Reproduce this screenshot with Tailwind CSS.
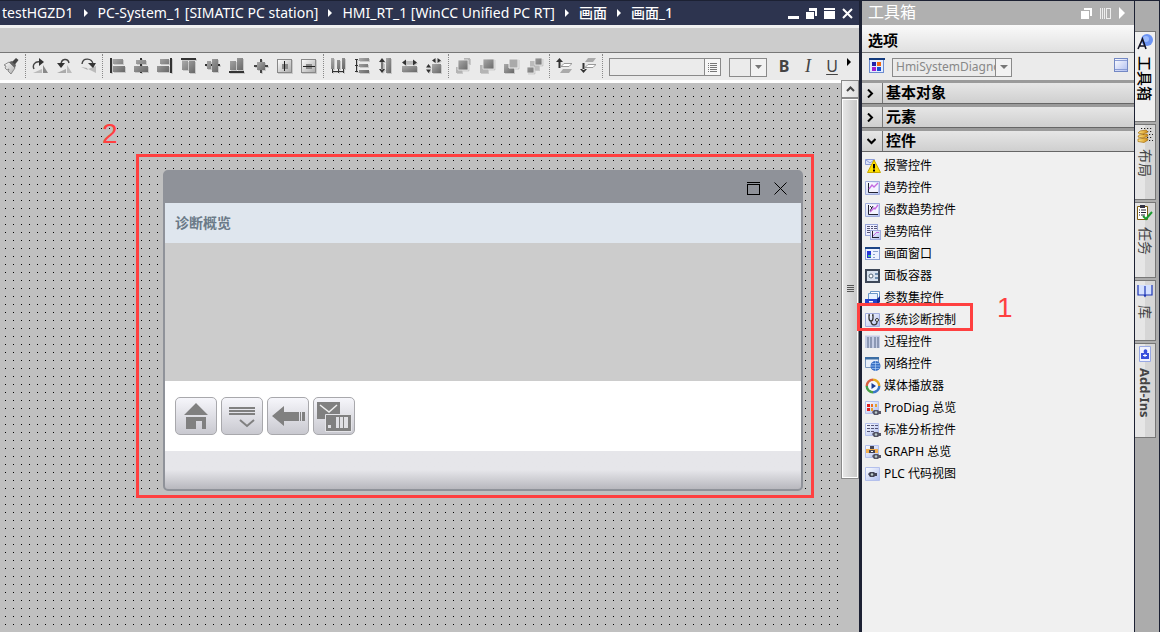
<!DOCTYPE html>
<html lang="zh-CN">
<head>
    <meta charset="UTF-8">
    <meta name="viewport" content="width=device-width, initial-scale=1.0">
    <title>HMI_RT_1 - 画面_1</title>
    <script src="https://cdn.jsdelivr.net/npm/@tailwindcss/browser@4"></script>
</head>
<body class="h-screen flex overflow-hidden bg-[#1c2133] text-black font-['Noto_Sans','Noto_Sans_CJK_SC',sans-serif]">

    <!-- Shared gradients -->
    <svg class="absolute w-0 h-0" aria-hidden="true">
        <defs>
            <linearGradient id="metal" x1="0" y1="0" x2="1" y2="1"><stop offset="0" stop-color="#aaa"/><stop offset="1" stop-color="#686868"/></linearGradient>
            <linearGradient id="pale" x1="0" y1="0" x2="1" y2="1"><stop offset="0" stop-color="#fff"/><stop offset="1" stop-color="#aaa"/></linearGradient>
            <linearGradient id="blue" x1="0" y1="0" x2="1" y2="1"><stop offset="0" stop-color="#fff"/><stop offset="1" stop-color="#aebdf0"/></linearGradient>
            <linearGradient id="gold" x1="0" y1="0" x2="1" y2="0"><stop offset="0" stop-color="#ffe98a"/><stop offset="1" stop-color="#d08a10"/></linearGradient>
        </defs>
    </svg>

    <!-- Editor -->
    <main class="flex-1 min-w-0 flex flex-col mr-[3px]">
        <header class="h-[25px] shrink-0 flex items-center bg-[#2d344f] border-t border-[#1c2133] text-white pr-[6px]">
            <nav class="flex items-center flex-1 gap-[10px] pl-[2px] text-[14px] leading-5 whitespace-nowrap">
                <span>testHGZD1</span>
                <svg class="w-1 h-2" viewBox="0 0 4 8"><path d="M0 0l4 4-4 4z" fill="#fff"/></svg>
                <span>PC-System_1 [SIMATIC PC station]</span>
                <svg class="w-1 h-2" viewBox="0 0 4 8"><path d="M0 0l4 4-4 4z" fill="#fff"/></svg>
                <span>HMI_RT_1 [WinCC Unified PC RT]</span>
                <svg class="w-1 h-2" viewBox="0 0 4 8"><path d="M0 0l4 4-4 4z" fill="#fff"/></svg>
                <span class="font-medium">画面</span>
                <svg class="w-1 h-2" viewBox="0 0 4 8"><path d="M0 0l4 4-4 4z" fill="#fff"/></svg>
                <span class="font-medium">画面_1</span>
            </nav>
            <div class="flex gap-[7px]">
                <button aria-label="最小化"><svg class="w-[11px] h-[11px]" viewBox="0 0 11 11" shape-rendering="crispEdges"><path d="M0 8h11v3H0z" fill="#fff"/></svg></button>
                <button aria-label="还原"><svg class="w-[11px] h-[11px]" viewBox="0 0 11 11" shape-rendering="crispEdges"><path d="M0 4h8v7H0zM3 0h8v8H9V3H3z" fill="#fff"/></svg></button>
                <button aria-label="最大化"><svg class="w-[11px] h-[11px]" viewBox="0 0 11 11" shape-rendering="crispEdges"><path d="M0 0h11v2H0zM0 3h11v8H0z" fill="#fff"/></svg></button>
                <button aria-label="关闭"><svg class="w-[11px] h-[11px]" viewBox="0 0 11 11"><path d="M1 1l9 9M10 1l-9 9" stroke="#fff" stroke-width="2"/></svg></button>
            </div>
        </header>
        <div class="h-7 shrink-0 bg-[#ccc] border-t-[3px] border-t-[#f0f0f0] border-b border-b-[#777]"></div>

        <!-- Toolbar -->
        <div class="h-[27px] shrink-0 flex items-center pl-[3px] pb-[2px] bg-[#eaeaea] overflow-hidden relative" role="toolbar">
            <button aria-label="格式刷"><svg class="w-4 h-4" viewBox="0 0 16 16"><path d="M1 7l5-3 6 6-4 6-3-3 1-2-2 1-2-2 1-2z" fill="url(#pale)" stroke="#777" stroke-width=".8"/><path d="M6 4l3-1 4 4-1 3z" fill="#666"/><path d="M9 4l4-4 2.500 2L12 6.500z" fill="#444"/></svg></button>
            <span class="w-px h-6 mx-[6px] border-l border-dotted border-[#888]"></span>
            <div class="flex gap-2">
                <button aria-label="向右旋转"><svg class="w-4 h-4" viewBox="0 0 16 16"><path d="M1 15l9-4v4z" fill="#bbb"/><path d="M11 7l5 8h-5z" fill="#888"/><path d="M2 11c-2-4 1-8 6-7" fill="none" stroke="#444" stroke-width="1.400"/><path d="M7 0l5 4-5 4z" fill="#333"/></svg></button>
                <button aria-label="向左旋转"><svg class="w-4 h-4" viewBox="0 0 16 16"><path d="M1 15l9-4v4z" fill="#aaa"/><path d="M11 7l5 8h-5z" fill="#bbb"/><path d="M13 5C12 0 5 0 5 7" fill="none" stroke="#444" stroke-width="1.400"/><path d="M1 5h8l-4 5z" fill="#333"/></svg></button>
                <button aria-label="翻转"><svg class="w-4 h-4" viewBox="0 0 16 16"><path d="M1 9l6 1 1 2z" fill="#aaa"/><path d="M8 11l8 4V8z" fill="#bbb"/><path d="M2 6C3-1 12 0 13 6" fill="none" stroke="#444" stroke-width="1.400"/><path d="M8 5h8l-3 5z" fill="#333"/></svg></button>
            </div>
            <span class="w-px h-6 mx-[6px] border-l border-dotted border-[#888]"></span>
            <div class="flex gap-2 drop-shadow-[1px_1px_0_#c8c8c8]">
                <button aria-label="左对齐"><svg class="w-4 h-4" viewBox="0 0 16 16"><path d="M4 1h10v5H4zM4 8h12v6H4z" fill="url(#metal)"/><path d="M1 0h2v15H1z" fill="#333"/></svg></button>
                <button aria-label="水平居中"><svg class="w-4 h-4" viewBox="0 0 16 16"><path d="M7 0h2v15H7z" fill="#333"/><path d="M3 2h10v4H3zM1 8h14v6H1z" fill="url(#metal)"/></svg></button>
                <button aria-label="右对齐"><svg class="w-4 h-4" viewBox="0 0 16 16"><path d="M3 1h9v5H3zM0 8h12v6H0z" fill="url(#metal)"/><path d="M13 0h2v15h-2z" fill="#333"/></svg></button>
                <button aria-label="顶端对齐"><svg class="w-4 h-4" viewBox="0 0 16 16"><path d="M1 3h6v9H1zM8 3h6v12H8z" fill="url(#metal)"/><path d="M0 0h15v2H0z" fill="#333"/></svg></button>
                <button aria-label="垂直居中"><svg class="w-4 h-4" viewBox="0 0 16 16"><path d="M0 6h15v2H0z" fill="#333"/><path d="M2 3h4v8H2zM7 1h6v13H7z" fill="url(#metal)"/></svg></button>
                <button aria-label="底端对齐"><svg class="w-4 h-4" viewBox="0 0 16 16"><path d="M1 3h6v9H1zM8 0h6v12H8z" fill="url(#metal)"/><path d="M0 13h15v2H0z" fill="#333"/></svg></button>
                <button aria-label="居中"><svg class="w-4 h-4" viewBox="0 0 16 16"><path d="M7 1h2v14H7zM1 7h14v2H1z" fill="#444"/><path d="M4 4h8v8H4z" fill="url(#metal)"/></svg></button>
                <button aria-label="窗口内水平居中"><svg class="w-4 h-4" viewBox="0 0 16 16" shape-rendering="crispEdges"><path d="M.5 1.500h14v13H.5z" fill="url(#pale)" stroke="#888"/><path d="M5 6h6v5H5z" fill="#888"/><path d="M7 3h1v10H7z" fill="#222"/></svg></button>
                <button aria-label="窗口内垂直居中"><svg class="w-4 h-4" viewBox="0 0 16 16" shape-rendering="crispEdges"><path d="M.5 1.500h14v13H.5z" fill="url(#pale)" stroke="#888"/><path d="M5 6h6v5H5z" fill="#888"/><path d="M2 8h12v1H2z" fill="#222"/></svg></button>
            </div>
            <span class="w-px h-6 mx-[6px] border-l border-dotted border-[#888]"></span>
            <div class="flex gap-2 drop-shadow-[1px_1px_0_#c8c8c8]">
                <button aria-label="水平等距"><svg class="w-4 h-4" viewBox="0 0 16 16"><path d="M1 0h3v11H1zM7 2h3v9H7zM12 0h3v11h-3z" fill="url(#metal)"/><path d="M2 13.500h12M2.500 11v4M8.500 11v4M13.500 11v4" stroke="#333"/></svg></button>
                <button aria-label="垂直等距"><svg class="w-4 h-4" viewBox="0 0 16 16"><path d="M5 0h10v3H5zM5 6h9v3H5zM5 12h10v3H5z" fill="url(#metal)"/><path d="M2.500 1v13M1 1.500h3M1 7.500h3M1 13.500h3" stroke="#333"/></svg></button>
                <button aria-label="相同高度"><svg class="w-4 h-4" viewBox="0 0 16 16"><path d="M8 0h5v15H8z" fill="url(#metal)"/><path d="M3 5h3v6H3z" fill="#bbb"/><path d="M4 0l3 4H1zM4 15l3-4H1zM3.500 3h1v9h-1z" fill="#333"/></svg></button>
                <button aria-label="相同宽度"><svg class="w-4 h-4" viewBox="0 0 16 16"><path d="M0 8h15v6H0z" fill="url(#metal)"/><path d="M4 3h8v3H4z" fill="#bbb"/><path d="M0 4.500l4-3v6zM15 4.500l-4-3v6z" fill="#333"/></svg></button>
                <button aria-label="相同大小"><svg class="w-4 h-4" viewBox="0 0 16 16"><path d="M6 6h9v9H6z" fill="url(#metal)"/><path d="M6 2.500L9.500 0v5zM15 2.500L11.500 0v5zM2.500 6l2.500 3.500H0zM2.500 15L5 11.500H0z" fill="#333"/></svg></button>
            </div>
            <span class="w-px h-6 mx-[6px] border-l border-dotted border-[#888]"></span>
            <div class="flex gap-2 drop-shadow-[1px_1px_0_#c8c8c8]">
                <button aria-label="置于顶层"><svg class="w-4 h-4" viewBox="0 0 16 16"><path d="M9 0h6v6H9zM1 9h6v6H1z" fill="#b4b4b4"/><path d="M3 2h10v10H3z" fill="url(#metal)" stroke="#eee" stroke-width=".8"/></svg></button>
                <button aria-label="上移一层"><svg class="w-4 h-4" viewBox="0 0 16 16"><path d="M1 7h8v8H1z" fill="#b4b4b4"/><path d="M4 1h11v10H4z" fill="url(#metal)" stroke="#eee" stroke-width=".8"/></svg></button>
                <button aria-label="下移一层"><svg class="w-4 h-4" viewBox="0 0 16 16"><path d="M1 6h10v9H1z" fill="url(#metal)"/><path d="M6 1h9v9H6z" fill="#aaa" stroke="#eee"/></svg></button>
                <button aria-label="置于底层"><svg class="w-4 h-4" viewBox="0 0 16 16"><path d="M3 3h9v9H3z" fill="#bbb"/><path d="M8 0h7v7H8zM0 9h7v6H0z" fill="url(#metal)" stroke="#eee" stroke-width=".8"/></svg></button>
            </div>
            <span class="w-px h-6 mx-[6px] border-l border-dotted border-[#888]"></span>
            <div class="flex gap-2">
                <button aria-label="上移图层"><svg class="w-4 h-4" viewBox="0 0 16 16"><path d="M3.500 0L7 4H0zM2.500 3h2v7h-2z" fill="#333"/><path d="M8 5.500h8l-3 3H5z" fill="#fff" stroke="#999"/><path d="M7 11h9l-3 4H4z" fill="#aaa"/></svg></button>
                <button aria-label="下移图层"><svg class="w-4 h-4" viewBox="0 0 16 16"><path d="M3.500 15L7 11H0zM2.500 5h2v7h-2z" fill="#333"/><path d="M8 0h8l-3 4H5z" fill="#aaa"/><path d="M8 6.500h8l-3 3H5z" fill="#fff" stroke="#999"/></svg></button>
            </div>
            <span class="w-px h-6 mx-[6px] border-l border-dotted border-[#888]"></span>
            <div class="w-28 h-[18px] flex border border-[#8a8a8a] mt-[3px]">
                <input type="text" aria-label="字体" class="flex-1 min-w-0 bg-[#ebebeb] px-1 text-xs outline-none">
                <button aria-label="选择字体" class="w-4 border-l border-[#8a8a8a] bg-[#f6f6f6] flex items-center justify-center"><svg class="w-[9px] h-[9px]" viewBox="0 0 9 9" shape-rendering="crispEdges"><path d="M0 .5h1M2 .5h7M0 2.500h1M2 2.500h7M0 4.500h1M2 4.500h7M0 6.500h1M2 6.500h7M0 8.500h1M2 8.500h7" stroke="#777"/></svg></button>
            </div>
            <div class="relative w-[38px] h-[19px] ml-2 mt-[3px]">
                <select aria-label="字号" class="appearance-none block w-full h-full border border-[#8a8a8a] bg-[#ebebeb]"></select>
                <span class="absolute inset-y-px right-px w-4 border-l border-[#8a8a8a] bg-[#f2f2f2] flex items-center justify-center pointer-events-none"><svg class="w-[7px] h-1" viewBox="0 0 7 4"><path d="M0 0h7L3.500 4z" fill="#777"/></svg></span>
            </div>
            <div class="flex gap-2 ml-[9px] text-[16px] leading-4 text-[#444]">
                <button class="w-4 font-bold">B</button>
                <button class="w-4 italic font-['Liberation_Serif',serif] text-[18px]">I</button>
                <button class="w-4 underline underline-offset-2">U</button>
            </div>
            <button aria-label="更多" class="ml-[7px] mb-2"><svg class="w-1 h-2" viewBox="0 0 4 8"><path d="M0 0l4 4-4 4z"/></svg></button>
        </div>

        <div class="flex-1 min-h-0 flex">
            <!-- Screen canvas -->
            <div class="flex-1 min-w-0 border-t-[3px] border-white bg-[#c0c0c0] relative">
                <svg class="absolute inset-0 w-full h-full" aria-hidden="true" shape-rendering="crispEdges">
                    <pattern id="grid" x="5" y="5" width="8" height="8" patternUnits="userSpaceOnUse"><rect width="1" height="1"/></pattern>
                    <rect width="100%" height="100%" fill="url(#grid)"/>
                </svg>
                <span class="absolute left-[102px] top-[35px] text-[28px] leading-8 text-[#ff4040] font-['Liberation_Sans',sans-serif]">2</span>
                <div class="relative mt-[71px] ml-[136px] mr-[27px] border-3 border-[#ff4040] pt-[13px] pb-1 pl-6 pr-2">
                    <section class="rounded-[5px] overflow-hidden border-2 border-[#8f9299] bg-[#8f9299]">
                        <div class="h-[31px] flex items-center justify-end gap-[14px] pr-[14px] pt-[2px]">
                            <button aria-label="最大化"><svg class="w-[13px] h-[13px]" viewBox="0 0 13 13" shape-rendering="crispEdges"><path d="M0 .5h13M.5 2.500h12v10H.5z" fill="none" stroke="#000"/></svg></button>
                            <button aria-label="关闭"><svg class="w-[13px] h-[13px]" viewBox="0 0 13 13"><path d="M.5.5l12 12M12.500.5l-12 12" stroke="#000"/></svg></button>
                        </div>
                        <h2 class="h-10 flex items-center pl-[10px] pb-[2px] bg-[#dfe6ee] text-[14px] font-bold text-[#6b7a88]">诊断概览</h2>
                        <div class="h-[138px] bg-[#ccc]"></div>
                        <div class="h-[70px] bg-white flex items-center gap-1 pl-[10px]">
                            <button aria-label="主页" class="w-[42px] h-[38px] rounded-[5px] border border-[#a8a8ac] bg-linear-to-b from-[#f6f6fb] to-[#c9c9d0]">
                                <svg class="w-10 h-9" viewBox="0 0 40 36" fill="#808080"><path d="M20 5L32 17H8zM10 19h20v12h-4v-8h-6v8H10z"/></svg>
                            </button>
                            <button aria-label="列表" class="w-[42px] h-[38px] rounded-[5px] border border-[#a8a8ac] bg-linear-to-b from-[#f6f6fb] to-[#c9c9d0]">
                                <svg class="w-10 h-9" viewBox="0 0 40 36" fill="none" stroke="#808080" stroke-width="2"><path d="M7 10h26M7 13h26M7 16h26"/><path d="M18 22l7 6 7-6"/></svg>
                            </button>
                            <button aria-label="返回" class="w-[42px] h-[38px] rounded-[5px] border border-[#a8a8ac] bg-linear-to-b from-[#f6f6fb] to-[#c9c9d0]">
                                <svg class="w-10 h-9" viewBox="0 0 40 36" fill="#808080"><path d="M4 18L16 8v6h15v9H16v5zM32 14h1v9h-1zM34 14h3v9h-3z"/></svg>
                            </button>
                            <button aria-label="诊断缓冲区" class="w-[42px] h-[38px] rounded-[5px] border border-[#a8a8ac] bg-linear-to-b from-[#f6f6fb] to-[#c9c9d0]">
                                <svg class="w-10 h-9" viewBox="0 0 40 36"><path d="M3 4h23v17H3z" fill="#808080"/><path d="M6 7l9 7 8-7" fill="none" stroke="#eee" stroke-width="1.500"/><path d="M11.500 16.500h26v17h-26z" fill="#808080" stroke="#e4e4e8"/><path d="M14 27h3v3h-3zM22 19h3v11h-3zM26 19h3v11h-3zM30 19h4v11h-4z" fill="#e0e0e4"/></svg>
                            </button>
                        </div>
                        <div class="h-[38px] bg-linear-to-b from-[#e6e6ea] from-50% to-[#b8b8be]"></div>
                    </section>
                </div>
            </div>

            <!-- Scrollbar -->
            <div class="w-[18px] flex flex-col bg-[#c0c0c0]">
                <button aria-label="向上滚动" class="h-[18px] shrink-0 border border-[#8a8a8a] bg-linear-to-r from-[#f4f4f4] to-[#ddd] flex items-center justify-center"><svg class="w-[9px] h-[6px]" viewBox="0 0 9 6"><path d="M1 5l3.500-3.500L8 5" fill="none" stroke="#444" stroke-width="2"/></svg></button>
                <div class="h-[69%] border border-[#8a8a8a] bg-white p-px">
                    <div class="h-full bg-linear-to-r from-[#e6e6e6] to-[#c8c8c8] flex items-center justify-center"><svg class="w-[7px] h-[7px]" viewBox="0 0 7 7" shape-rendering="crispEdges"><path d="M0 .5h7M0 2.500h7M0 4.500h7M0 6.500h7" stroke="#555"/></svg></div>
                </div>
            </div>
        </div>
    </main>

    <!-- Toolbox -->
    <aside class="w-[272px] shrink-0 flex flex-col bg-[#f0f0f0] mt-px">
        <header class="h-6 shrink-0 flex items-center gap-2 pl-[6px] pr-[9px] bg-[#b0b0b0] text-white">
            <h1 class="flex-1 text-[16px] leading-[22px] pb-[2px]">工具箱</h1>
            <button aria-label="浮动"><svg class="w-[11px] h-[11px]" viewBox="0 0 11 11" shape-rendering="crispEdges"><path d="M0 3h8v8H0zM3 0h8v8H9V2H3z" fill="#fff"/></svg></button>
            <button aria-label="列"><svg class="w-[11px] h-[11px]" viewBox="0 0 11 11" shape-rendering="crispEdges"><path d="M.5 0v11M2.500 0v11M4.500 0v11M6.500.5h4v10h-4z" fill="none" stroke="#eee"/></svg></button>
            <button aria-label="折叠"><svg class="w-[6px] h-3" viewBox="0 0 6 12"><path d="M0 0l6 6-6 6z" fill="#fff"/></svg></button>
        </header>
        <h2 class="h-7 shrink-0 pl-[6px] pt-[3px] text-[15px] leading-6 font-bold bg-linear-to-b from-[#fafafa] to-[#e0e0e0] border-b border-[#777]">选项</h2>
        <div class="h-[27px] shrink-0 flex items-center pl-[7px] pr-[5px] pb-[2px] bg-[#ebebeb]">
            <button aria-label="视图"><svg class="w-4 h-4" viewBox="0 0 16 16" shape-rendering="crispEdges"><path d="M.5.5h14v14H.5z" fill="#e4ecff" stroke="#6c8cd0"/><path d="M0 0h16v2H0z" fill="#123a7c"/><path d="M3 4h4v4H3z" fill="#22a"/><path d="M8 4h4v4H8z" fill="#f26a10"/><path d="M3 9h4v4H3z" fill="#a020d0"/><path d="M8 9h4v4H8z" fill="#1a50d0"/></svg></button>
            <div class="relative w-[120px] h-[19px] ml-[7px] mt-[3px]">
                <select aria-label="类型" class="appearance-none block w-full h-full pl-[3px] pr-4 border border-[#8a8a8a] bg-[#ebebeb] text-[12px] leading-4 text-[#888]"><option>HmiSystemDiagnosisControl</option></select>
                <span class="absolute inset-y-px right-px w-4 border-l border-[#8a8a8a] bg-[#f2f2f2] flex items-center justify-center pointer-events-none"><svg class="w-2 h-1" viewBox="0 0 8 4"><path d="M0 0h8L4 4z" fill="#777"/></svg></span>
            </div>
            <button aria-label="预览" class="ml-auto"><svg class="w-[15px] h-[15px]" viewBox="0 0 15 15" shape-rendering="crispEdges"><path d="M.5.5h13v13H.5z" fill="url(#blue)" stroke="#7388c4"/><path d="M1 2.500h12M1 11.500h12" stroke="#8a9cd4"/></svg></button>
        </div>

        <div class="shrink-0 bg-[#9a9a9a] pt-[3px] flex flex-col gap-[3px] text-[15px] font-bold">
            <button class="h-[21px] flex items-center bg-linear-to-b from-[#e6e6e6] to-[#cfcfcf] border-b border-[#666]">
                <span class="w-[21px] h-full border-r border-[#777] flex items-center pl-[5px]"><svg class="w-[7px] h-[9px]" viewBox="0 0 7 9"><path d="M1 .5l4 4-4 4" fill="none" stroke="#000" stroke-width="2"/></svg></span>
                <span class="pl-[3px] pb-[2px] leading-[18px]">基本对象</span>
            </button>
            <button class="h-[21px] flex items-center bg-linear-to-b from-[#e6e6e6] to-[#cfcfcf] border-b border-[#666]">
                <span class="w-[21px] h-full border-r border-[#777] flex items-center pl-[5px]"><svg class="w-[7px] h-[9px]" viewBox="0 0 7 9"><path d="M1 .5l4 4-4 4" fill="none" stroke="#000" stroke-width="2"/></svg></span>
                <span class="pl-[3px] pb-[2px] leading-[18px]">元素</span>
            </button>
            <button class="h-[21px] flex items-center bg-linear-to-b from-[#e6e6e6] to-[#cfcfcf] border-b border-[#666]">
                <span class="w-[21px] h-full border-r border-[#777] flex items-center pl-[5px]"><svg class="w-[9px] h-[7px]" viewBox="0 0 9 7"><path d="M.5 1l4 4 4-4" fill="none" stroke="#000" stroke-width="2"/></svg></span>
                <span class="pl-[3px] pb-[2px] leading-[18px]">控件</span>
            </button>
        </div>

        <ul class="pt-[3px] pl-[3px] text-[12px] leading-[22px]">
            <li class="flex items-center gap-[3px] h-[22px]">
                <svg class="w-4 h-4" viewBox="0 0 16 16"><path d="M.5 1.500h9v5h-9z" fill="#dde4fc" stroke="#8c9cd8"/><path d="M1 2l4 3 4-3" fill="none" stroke="#8c9cd8"/><path d="M9 2l6.500 12.500h-13z" fill="#ffe000" stroke="#c8a800"/><path d="M8 6h2v4.500H8zM8 11.500h2v2H8z"/></svg>
                <span>报警控件</span>
            </li>
            <li class="flex items-center gap-[3px] h-[22px]">
                <svg class="w-4 h-4" viewBox="0 0 16 16"><path d="M.5 1.500h14v13H.5z" fill="url(#blue)" stroke="#a0acdc"/><path d="M3 3h10v9H3z" fill="#f4f4ff"/><path d="M3.500 3v9.500H13" fill="none" stroke="#223"/><path d="M4 9l3-4 2 2 4-4" fill="none" stroke="#c468e0" stroke-width="1.300"/></svg>
                <span>趋势控件</span>
            </li>
            <li class="flex items-center gap-[3px] h-[22px]">
                <svg class="w-4 h-4" viewBox="0 0 16 16"><path d="M.5 1.500h14v13H.5z" fill="url(#blue)" stroke="#a0acdc"/><path d="M3 3h10v9H3z" fill="#f4f4ff"/><path d="M3.500 3v9.500H13M5 4l2 2M8 4L5 9" fill="none" stroke="#223"/><path d="M5 10l4-4 1 1 3-4" fill="none" stroke="#c468e0" stroke-width="1.300"/></svg>
                <span>函数趋势控件</span>
            </li>
            <li class="flex items-center gap-[3px] h-[22px]">
                <svg class="w-4 h-4" viewBox="0 0 16 16" shape-rendering="crispEdges"><path d="M.5.5h12v11H.5z" fill="#eef" stroke="#98a4d8"/><path d="M2 2.500h3M6 2.500h2M9 2.500h3M2 4.500h3M6 4.500h2M9 4.500h3M2 6.500h3M2 8.500h3" stroke="#557"/><path d="M5.500 6.500h10v9h-10z" fill="url(#blue)" stroke="#a0acdc"/><path d="M7.500 7v6.500H14" fill="none" stroke="#223"/><path d="M8 12l3-3 3-1" fill="none" stroke="#c468e0"/></svg>
                <span>趋势陪伴</span>
            </li>
            <li class="flex items-center gap-[3px] h-[22px]">
                <svg class="w-4 h-4" viewBox="0 0 16 16" shape-rendering="crispEdges"><path d="M.5 1.500h14v12H.5z" fill="#eef2ff" stroke="#8ca0d4"/><path d="M0 1h15v2H0z" fill="#1c4486"/><path d="M2 5h4v7H2z" fill="#2434d8"/><path d="M3 9h3v2H3z" fill="#4b8"/><path d="M8 5.500h5M8 8.500h2M8 11.500h2" stroke="#8aa0cc"/></svg>
                <span>画面窗口</span>
            </li>
            <li class="flex items-center gap-[3px] h-[22px]">
                <svg class="w-4 h-4" viewBox="0 0 16 16"><path d="M1 2h13v12H1z" fill="#d8e2ee" stroke="#3e4858" stroke-width="2"/><circle cx="6" cy="8" r="2" fill="#fff" stroke="#567"/><path d="M10 5h3v2h-3zM10 9h3v2h-3z" fill="#7090b0"/></svg>
                <span>面板容器</span>
            </li>
            <li class="flex items-center gap-[3px] h-[22px]">
                <svg class="w-4 h-4" viewBox="0 0 16 16"><path d="M5.500 1.500h9v8h-9z" fill="#fff" stroke="#6c98c8"/><path d="M3.500 3.500h9v7h-9z" fill="#e8f2ff" stroke="#6c98c8"/><path d="M0 9h12v6H0z" fill="#2444cc"/><path d="M12 9l3-3v6l-3 3z" fill="#122c94"/><path d="M4 11h4v1.500H4z" fill="#fff"/></svg>
                <span>参数集控件</span>
            </li>
            <li class="relative flex items-center gap-[3px] h-[22px]">
                <svg class="w-4 h-4" viewBox="0 0 16 16"><path d="M.5 1.500h14v13H.5z" fill="url(#blue)" stroke="#a0acdc"/><path d="M5 3H4v3c0 4 4 4 4 0V3H7M6 9c0 5 6 5 6 1" fill="none" stroke="#333" stroke-width="1.300"/><circle cx="12" cy="8" r="1.500" fill="#fff" stroke="#333"/></svg>
                <span>系统诊断控制</span>
                <span class="absolute -left-2 -top-[6px] w-[116px] h-7 border-3 border-[#ff4040] z-10"></span>
                <span class="absolute left-[132px] -top-[17px] text-[28px] leading-8 text-[#ff4040] font-['Liberation_Sans',sans-serif]">1</span>
            </li>
            <li class="flex items-center gap-[3px] h-[22px]">
                <svg class="w-4 h-4" viewBox="0 0 16 16" shape-rendering="crispEdges"><path d="M0 1h15v13H0z" fill="#c4cce4"/><path d="M2 3h2v11H2zM5 3h2v11H5zM9 3h2v11H9zM12 3h2v11h-2z" fill="#8c98b4"/><path d="M0 1h15v1H0z" fill="#dde"/></svg>
                <span>过程控件</span>
            </li>
            <li class="flex items-center gap-[3px] h-[22px]">
                <svg class="w-4 h-4" viewBox="0 0 16 16"><path d="M.5 1.500h13v10H.5z" fill="#eaf0fa" stroke="#7c98c0"/><path d="M0 1h14v2.500H0z" fill="#3c6ea4"/><circle cx="10.500" cy="10" r="5" fill="#3870c4"/><path d="M6 10h9M7 7.500h7M7 12.500h7M10.500 5v10" stroke="#b8d8ff" stroke-width=".6"/></svg>
                <span>网络控件</span>
            </li>
            <li class="flex items-center gap-[3px] h-[22px]">
                <svg class="w-4 h-4" viewBox="0 0 16 16" fill="none" stroke-width="3"><path d="M8 2a6 6 0 0 1 6 6" stroke="#e8a820"/><path d="M14 8a6 6 0 0 1-6 6" stroke="#3c78c8"/><path d="M8 14a6 6 0 0 1-6-6" stroke="#48a048"/><path d="M2 8a6 6 0 0 1 6-6" stroke="#d86040"/><circle cx="8" cy="8" r="5" fill="#f4f8ff"/><path d="M6.500 5l4.500 3-4.500 3z" fill="#1c3c90"/></svg>
                <span>媒体播放器</span>
            </li>
            <li class="flex items-center gap-[3px] h-[22px]">
                <svg class="w-4 h-4" viewBox="0 0 16 16"><path d="M.5 1.500h13v12H.5z" fill="url(#blue)" stroke="#b4c0ec"/><path d="M2 4h3v3H2zM2 8h3v3H2z" fill="#e02020"/><path d="M6 4h2v3H6z" fill="#f07020"/><path d="M10 4h2v3h-2zM6 8h2v3H6z" fill="#e8a030"/><path d="M7 12l2-2h4l1 1h2v3h-2l-1 1H9z" fill="#556"/><circle cx="11" cy="12.500" r="1.200" fill="#bcc"/></svg>
                <span>ProDiag 总览</span>
            </li>
            <li class="flex items-center gap-[3px] h-[22px]">
                <svg class="w-4 h-4" viewBox="0 0 16 16"><path d="M.5 1.500h13v12H.5z" fill="url(#blue)" stroke="#b4c0ec"/><path d="M2 3.500h3M6 3.500h3M10 3.500h3M2 6.500h3M6 6.500h3M10 6.500h3M2 9.500h3M6 9.500h3" stroke="#557"/><path d="M7 12l2-2h4l1 1h2v3h-2l-1 1H9z" fill="#556"/><circle cx="11" cy="12.500" r="1.200" fill="#bcc"/></svg>
                <span>标准分析控件</span>
            </li>
            <li class="flex items-center gap-[3px] h-[22px]">
                <svg class="w-4 h-4" viewBox="0 0 16 16"><path d="M.5 1.500h13v12H.5z" fill="url(#blue)" stroke="#b4c0ec"/><path d="M1 5h12v4H1z" fill="#f4b050"/><path d="M5 2h4v3H5zM4 6h6v3H4z" fill="#445"/><path d="M6 7h2v1H6z" fill="#fff"/><path d="M7 12l2-2h4l1 1h2v3h-2l-1 1H9z" fill="#556"/><circle cx="11" cy="12.500" r="1.200" fill="#bcc"/></svg>
                <span>GRAPH 总览</span>
            </li>
            <li class="flex items-center gap-[3px] h-[22px]">
                <svg class="w-4 h-4" viewBox="0 0 16 16"><path d="M.5 1.500h14v13H.5z" fill="url(#blue)" stroke="#b4c0ec"/><path d="M3 8l2-2h4l1 1h2v3h-2l-1 1H5z" fill="#445"/><circle cx="7" cy="8.500" r="1.200" fill="#bcc"/></svg>
                <span>PLC 代码视图</span>
            </li>
        </ul>
    </aside>

    <!-- Task card tabs -->
    <nav class="w-6 shrink-0 flex flex-col gap-[2px] mt-px pt-[30px] pr-[3px] ml-px mr-px bg-[#acacac] text-[14px] leading-5 text-[#444]">
        <button class="h-[91px] flex flex-col items-center gap-[6px] pt-[2px] bg-[#f0f0f0] border border-l-0 border-[#777] font-medium text-black">
            <svg class="w-4 h-4 shrink-0" viewBox="0 0 16 16"><circle cx="10" cy="6" r="6" fill="#6c94f4"/><circle cx="9" cy="5" r="3" fill="#9cbcff"/><path d="M1 15L5.500 5 9 15M3 12h5" fill="none" stroke="#112" stroke-width="1.600"/></svg>
            <span class="[writing-mode:vertical-rl] [text-orientation:sideways] text-[15px]">工具箱</span>
        </button>
        <button class="h-[76px] flex flex-col items-center gap-[6px] pt-[2px] bg-linear-to-r from-[#e6e6e6] from-50% to-[#d6d6d6] to-50% border border-l-0 border-[#777]">
            <svg class="w-4 h-4 shrink-0" viewBox="0 0 16 16"><path d="M4 1.500h12M4 4.500h12M6 7.500h10M10 10.500h6M12 13.500h4" stroke="#222" stroke-width="1.200" stroke-dasharray="1.200 1.800"/><path d="M3 4l6-1 2 2-5 2-5-1zM2 8l8-1 1 2-5 2-5-1zM1 12l9-1 1 2-4 2.500-6-1z" fill="url(#gold)" stroke="#a87010" stroke-width=".7"/></svg>
            <span class="[writing-mode:vertical-rl] [text-orientation:sideways]">布局</span>
        </button>
        <button class="h-[76px] flex flex-col items-center gap-[6px] pt-[2px] bg-linear-to-r from-[#e6e6e6] from-50% to-[#d6d6d6] to-50% border border-l-0 border-[#777]">
            <svg class="w-4 h-4 shrink-0" viewBox="0 0 16 16"><path d="M.5 1.500h10v13H.5z" fill="#fff" stroke="#7c5c10"/><path d="M3 0h5v3H3z" fill="#334"/><path d="M2 5h1M4 5h5M2 7.500h1M4 7.500h5M2 10h1M4 10h4" stroke="#223"/><path d="M6 11l3 3 6-7" fill="none" stroke="#1c9a30" stroke-width="2"/></svg>
            <span class="[writing-mode:vertical-rl] [text-orientation:sideways]">任务</span>
        </button>
        <button class="h-[61px] flex flex-col items-center gap-[6px] pt-[2px] bg-linear-to-r from-[#e6e6e6] from-50% to-[#d6d6d6] to-50% border border-l-0 border-[#777]">
            <svg class="w-4 h-4 shrink-0" viewBox="0 0 16 16"><path d="M1 2h14v10H9l-1 1-1-1H1z" fill="#d4e0ff"/><path d="M1 2v10h6l1 1.500L9 12h6V2M8 3v9" fill="none" stroke="#1c34b4" stroke-width="1.200"/></svg>
            <span class="[writing-mode:vertical-rl] [text-orientation:sideways]">库</span>
        </button>
        <button class="h-[95px] flex flex-col items-center gap-[6px] pt-[2px] bg-linear-to-r from-[#e6e6e6] from-50% to-[#d6d6d6] to-50% border border-l-0 border-[#777]">
            <svg class="w-4 h-4 shrink-0" viewBox="0 0 16 16"><path d="M2.500.5h11v15h-11z" fill="#f0f2ff" stroke="#98a8e4"/><path d="M4 7h3c-2-5 5-5 3 0h2v6H4z" fill="#3850dc"/><path d="M6 9.500h4M8 8v3" stroke="#fff"/></svg>
            <span class="[writing-mode:vertical-rl] [text-orientation:sideways] text-[13px] font-bold">Add-Ins</span>
        </button>
    </nav>
</body>
</html>
